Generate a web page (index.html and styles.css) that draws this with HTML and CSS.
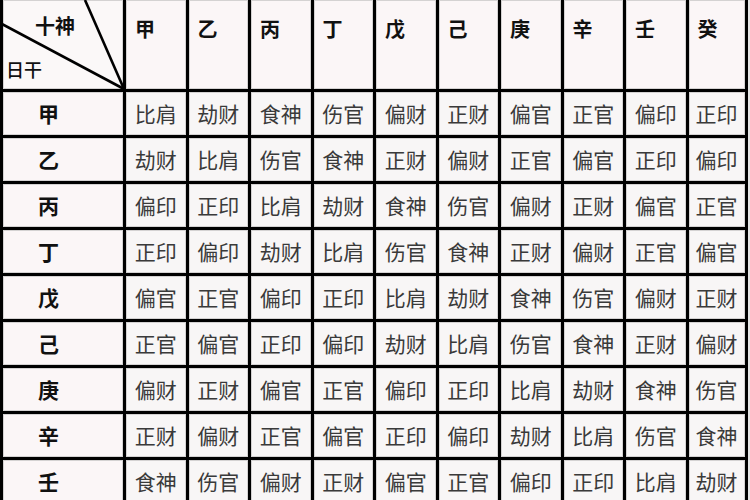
FILE: index.html
```html
<!DOCTYPE html>
<html lang="zh-CN">
<head>
<meta charset="utf-8">
<title>十神表</title>
<link rel="stylesheet" href="styles.css">
</head>
<body>
<div class="page">
<div class="table">
  <div class="cell corner">
    <svg class="diag" width="124" height="90" viewBox="0 0 124 90">
      <line x1="-3" y1="23" x2="121" y2="89" stroke="#000" stroke-width="2.6"/>
      <line x1="82" y1="0" x2="121" y2="89" stroke="#000" stroke-width="2.6"/>
    </svg>
    <span class="shishen">十神</span>
    <span class="rigan">日干</span>
  </div>
  <div class="cell head">甲</div><div class="cell head">乙</div><div class="cell head">丙</div><div class="cell head">丁</div><div class="cell head">戊</div><div class="cell head">己</div><div class="cell head">庚</div><div class="cell head">辛</div><div class="cell head">壬</div><div class="cell head">癸</div>

  <div class="cell rowh">甲</div><div class="cell">比肩</div><div class="cell">劫财</div><div class="cell">食神</div><div class="cell">伤官</div><div class="cell">偏财</div><div class="cell">正财</div><div class="cell">偏官</div><div class="cell">正官</div><div class="cell">偏印</div><div class="cell">正印</div>
  <div class="cell rowh">乙</div><div class="cell">劫财</div><div class="cell">比肩</div><div class="cell">伤官</div><div class="cell">食神</div><div class="cell">正财</div><div class="cell">偏财</div><div class="cell">正官</div><div class="cell">偏官</div><div class="cell">正印</div><div class="cell">偏印</div>
  <div class="cell rowh">丙</div><div class="cell">偏印</div><div class="cell">正印</div><div class="cell">比肩</div><div class="cell">劫财</div><div class="cell">食神</div><div class="cell">伤官</div><div class="cell">偏财</div><div class="cell">正财</div><div class="cell">偏官</div><div class="cell">正官</div>
  <div class="cell rowh">丁</div><div class="cell">正印</div><div class="cell">偏印</div><div class="cell">劫财</div><div class="cell">比肩</div><div class="cell">伤官</div><div class="cell">食神</div><div class="cell">正财</div><div class="cell">偏财</div><div class="cell">正官</div><div class="cell">偏官</div>
  <div class="cell rowh">戊</div><div class="cell">偏官</div><div class="cell">正官</div><div class="cell">偏印</div><div class="cell">正印</div><div class="cell">比肩</div><div class="cell">劫财</div><div class="cell">食神</div><div class="cell">伤官</div><div class="cell">偏财</div><div class="cell">正财</div>
  <div class="cell rowh">己</div><div class="cell">正官</div><div class="cell">偏官</div><div class="cell">正印</div><div class="cell">偏印</div><div class="cell">劫财</div><div class="cell">比肩</div><div class="cell">伤官</div><div class="cell">食神</div><div class="cell">正财</div><div class="cell">偏财</div>
  <div class="cell rowh">庚</div><div class="cell">偏财</div><div class="cell">正财</div><div class="cell">偏官</div><div class="cell">正官</div><div class="cell">偏印</div><div class="cell">正印</div><div class="cell">比肩</div><div class="cell">劫财</div><div class="cell">食神</div><div class="cell">伤官</div>
  <div class="cell rowh">辛</div><div class="cell">正财</div><div class="cell">偏财</div><div class="cell">正官</div><div class="cell">偏官</div><div class="cell">正印</div><div class="cell">偏印</div><div class="cell">劫财</div><div class="cell">比肩</div><div class="cell">伤官</div><div class="cell">食神</div>
  <div class="cell rowh">壬</div><div class="cell">食神</div><div class="cell">伤官</div><div class="cell">偏财</div><div class="cell">正财</div><div class="cell">偏官</div><div class="cell">正官</div><div class="cell">偏印</div><div class="cell">正印</div><div class="cell">比肩</div><div class="cell">劫财</div>
</div>
</div>
</body>
</html>
```

FILE: styles.css
```css
html, body {
  margin: 0;
  padding: 0;
  width: 750px;
  height: 500px;
  overflow: hidden;
  background: #e6e6e6;
}

.page {
  width: 750px;
  height: 500px;
  overflow: hidden;
}

.table {
  display: inline-grid;
  grid-template-columns: 120px repeat(9, 59.5px) 56px;
  grid-template-rows: 89px repeat(9, 43px);
  gap: 3px;
  padding-left: 3px;
  border-right: 3px solid #000;
  background: #000;
  font-family: "Noto Sans CJK SC", "Noto Sans", sans-serif;
}

.cell {
  background: #f8f6f6;
  box-shadow: inset 0 0 0 1px #d4d2d2;
  display: flex;
  align-items: center;
  justify-content: center;
  font-size: 21px;
  line-height: 1;
  color: #3a3a3a;
  letter-spacing: 0;
}

.head {
  background: #fbf6f7;
  align-items: flex-start;
  justify-content: flex-start;
  padding: 19px 0 0 9px;
  font-size: 20px;
  font-weight: 700;
  color: #111;
}

.rowh {
  background: #fbf6f7;
  justify-content: flex-start;
  padding-left: 35px;
  font-size: 21px;
  font-weight: 700;
  color: #111;
}

.corner {
  position: relative;
  background: #fbf8f8;
  display: block;
  overflow: visible;
}

.diag {
  position: absolute;
  left: 0;
  top: 0;
  overflow: visible;
}

.shishen {
  position: absolute;
  left: 32px;
  top: 16px;
  font-size: 20px;
  font-weight: 700;
  color: #111;
}

.rigan {
  position: absolute;
  left: 3px;
  top: 60px;
  font-size: 18px;
  font-weight: 500;
  color: #111;
}
```
